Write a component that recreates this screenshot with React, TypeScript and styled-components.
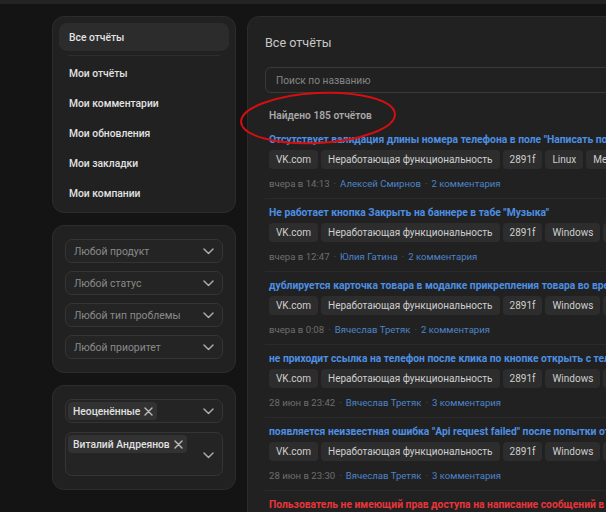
import React from "react";
import styled, { createGlobalStyle } from "styled-components";

const Global = createGlobalStyle`
  html, body { margin: 0; padding: 0; background: #141414; overflow: hidden; }
  body { font-family: Roboto, "Noto Sans", "Liberation Sans", sans-serif; -webkit-font-smoothing: antialiased; }
  #root { width: 606px; height: 512px; overflow: hidden; }
`;

const TopBar = styled.div`
  height: 4px;
  background: #232323;
`;

const Page = styled.div`
  position: relative;
  display: flex;
  align-items: flex-start;
  gap: 11px;
  padding: 12px 0 0 52px;
  width: 1000px;
`;

const Side = styled.div`
  width: 184px;
  flex: none;
  display: flex;
  flex-direction: column;
  gap: 12px;
`;

const Card = styled.div<{ $pad?: string }>`
  box-sizing: border-box;
  background: #212121;
  border: 1px solid #2c2c2c;
  border-radius: 12px;
  padding: ${(p) => p.$pad || "0"};
`;

const NavItem = styled.div<{ $active?: boolean }>`
  height: ${(p) => (p.$active ? "28px" : "30px")};
  display: flex;
  align-items: center;
  padding: 0 10px;
  border-radius: 8px;
  background: ${(p) => (p.$active ? "#2c2c2c" : "transparent")};
  color: #e2e2e2;
  font-size: 10.3px;
  font-weight: 500;
`;

const NavDivider = styled.div`
  height: 1px;
  background: #2e2e2e;
  margin: 4px 9px 2px;
`;

const Stack = styled.div<{ $gap: number }>`
  display: flex;
  flex-direction: column;
  gap: ${(p) => p.$gap}px;
`;

const Select = styled.div<{ $tall?: boolean; $chip?: boolean }>`
  box-sizing: border-box;
  height: ${(p) => (p.$tall ? "44px" : "24px")};
  border: 1px solid #353535;
  background: #242424;
  border-radius: 7px;
  display: flex;
  align-items: ${(p) => (p.$tall ? "flex-start" : "center")};
  padding: ${(p) => (p.$tall ? "2px 8px 0 2px" : p.$chip ? "0 8px 0 2px" : "0 8px 0 8px")};
`;

const SelectText = styled.span`
  flex: 1;
  color: #8a8a8a;
  font-size: 10.4px;
`;

const Chip = styled.span`
  display: inline-flex;
  align-items: center;
  gap: 4px;
  height: 18px;
  padding: 0 4px 0 5px;
  background: #323232;
  border-radius: 4px;
  color: #e0e0e0;
  font-size: 10.3px;
  font-weight: 500;
  flex: none;
`;

const ChevronWrap = styled.span`
  margin-left: auto;
  display: flex;
  align-items: center;
  align-self: center;
  color: #a8a8a8;
`;

const Main = styled(Card)`
  width: 560px;
  flex: none;
  padding: 18px 17px;
  min-height: 600px;
`;

const Title = styled.div`
  font-size: 12.6px;
  line-height: 16px;
  color: #c8c8c8;
`;

const Search = styled.div`
  box-sizing: border-box;
  margin-top: 16px;
  height: 26px;
  border: 1px solid #3a3a3a;
  border-radius: 6px;
  display: flex;
  align-items: center;
  padding: 0 10px;
  color: #858585;
  font-size: 10.2px;
`;

const Found = styled.div`
  margin-top: 16px;
  padding-left: 4px;
  font-size: 10.2px;
  line-height: 14px;
  font-weight: 600;
  color: #a8a8a8;
`;

const List = styled.div`
  margin-top: 3px;
`;

const Item = styled.div`
  padding: 7px 4px;
  border-bottom: 1px solid #2a2a2a;
`;

const ItemTitle = styled.div<{ $red?: boolean }>`
  font-size: 10.3px;
  line-height: 14px;
  font-weight: 700;
  white-space: nowrap;
  color: ${(p) => (p.$red ? "#e8353b" : "#4d8fe3")};
`;

const Tags = styled.div`
  margin-top: 3px;
  display: flex;
  gap: 3px;
  white-space: nowrap;
`;

const Tag = styled.span`
  height: 19px;
  display: inline-flex;
  align-items: center;
  padding: 0 7px;
  background: #2d2d2d;
  border-radius: 4px;
  color: #cfcfcf;
  font-size: 10px;
  flex: none;
`;

const Meta = styled.div`
  margin-top: 8px;
  font-size: 9.6px;
  line-height: 14px;
  color: #6e6e6e;
  white-space: nowrap;
`;

const Sep = styled.span`
  color: #555;
  margin: 0 4px;
`;

const MetaLink = styled.span`
  color: #4c84c8;
`;

const Annotation = styled.svg`
  position: absolute;
  left: 238px;
  top: 82px;
  pointer-events: none;
`;

const Chevron = () => (
  <svg width="11" height="7" viewBox="0 0 11 7" fill="none">
    <path d="M1 1l4.5 4.5L10 1" stroke="currentColor" strokeWidth="1.5" strokeLinecap="round" strokeLinejoin="round" />
  </svg>
);

const Cross = () => (
  <svg width="9" height="9" viewBox="0 0 9 9" fill="none">
    <path d="M1 1l7 7M8 1l-7 7" stroke="#bdbdbd" strokeWidth="1.4" strokeLinecap="round" />
  </svg>
);

const nav = ["Мои отчёты", "Мои комментарии", "Мои обновления", "Мои закладки", "Мои компании"];
const filters = ["Любой продукт", "Любой статус", "Любой тип проблемы", "Любой приоритет"];

type Report = { title: string; os: string; extra: string; date: string; author: string; comments: string; red?: boolean };

const reports: Report[] = [
  { title: 'Отсутствует валидация длины номера телефона в поле "Написать по телефону"', os: "Linux", extra: "Medium", date: "вчера в 14:13", author: "Алексей Смирнов", comments: "2 комментария" },
  { title: 'Не работает кнопка Закрыть на баннере в табе "Музыка"', os: "Windows", extra: "Средний", date: "вчера в 12:47", author: "Юлия Гатина", comments: "2 комментария" },
  { title: "дублируется карточка товара в модалке прикрепления товара во время загрузки", os: "Windows", extra: "Средний", date: "вчера в 0:08", author: "Вячеслав Третяк", comments: "2 комментария" },
  { title: "не приходит ссылка на телефон после клика по кнопке открыть с телефона", os: "Windows", extra: "Средний", date: "28 июн в 23:42", author: "Вячеслав Третяк", comments: "3 комментария" },
  { title: 'появляется неизвестная ошибка "Api request failed" после попытки отправить', os: "Windows", extra: "Средний", date: "28 июн в 23:30", author: "Вячеслав Третяк", comments: "3 комментария" },
  { title: "Пользователь не имеющий прав доступа на написание сообщений в сообществе", os: "Windows", extra: "Средний", date: "28 июн в 23:12", author: "Вячеслав Третяк", comments: "1 комментарий", red: true },
];

export default function App() {
  return (
    <>
      <Global />
      <TopBar />
      <Page>
        <Side>
          <Card $pad="6px 6px 4px">
            <NavItem $active>Все отчёты</NavItem>
            <NavDivider />
            {nav.map((n) => (
              <NavItem key={n}>{n}</NavItem>
            ))}
          </Card>
          <Card $pad="13px 12px 13px">
            <Stack $gap={8}>
              {filters.map((f) => (
                <Select key={f}>
                  <SelectText>{f}</SelectText>
                  <ChevronWrap>
                    <Chevron />
                  </ChevronWrap>
                </Select>
              ))}
            </Stack>
          </Card>
          <Card $pad="13px 12px 13px">
            <Stack $gap={9}>
              <Select $chip>
                <Chip>
                  Неоценённые <Cross />
                </Chip>
                <ChevronWrap>
                  <Chevron />
                </ChevronWrap>
              </Select>
              <Select $tall>
                <Chip>
                  Виталий Андреянов <Cross />
                </Chip>
                <ChevronWrap>
                  <Chevron />
                </ChevronWrap>
              </Select>
            </Stack>
          </Card>
        </Side>
        <Main>
          <Title>Все отчёты</Title>
          <Search>Поиск по названию</Search>
          <Found>Найдено 185 отчётов</Found>
          <List>
            {reports.map((r, i) => (
              <Item key={i}>
                <ItemTitle $red={r.red}>{r.title}</ItemTitle>
                <Tags>
                  <Tag>VK.com</Tag>
                  <Tag>Неработающая функциональность</Tag>
                  <Tag>2891f</Tag>
                  <Tag>{r.os}</Tag>
                  <Tag>{r.extra}</Tag>
                </Tags>
                <Meta>
                  {r.date}
                  <Sep>·</Sep>
                  <MetaLink>{r.author}</MetaLink>
                  <Sep>·</Sep>
                  <MetaLink>{r.comments}</MetaLink>
                </Meta>
              </Item>
            ))}
          </List>
        </Main>
        <Annotation width="170" height="64" viewBox="0 0 170 64">
          <ellipse cx="80" cy="32" rx="77" ry="25" fill="none" stroke="#d40f12" strokeWidth="2" transform="rotate(-3 80 32)" />
        </Annotation>
      </Page>
    </>
  );
}
